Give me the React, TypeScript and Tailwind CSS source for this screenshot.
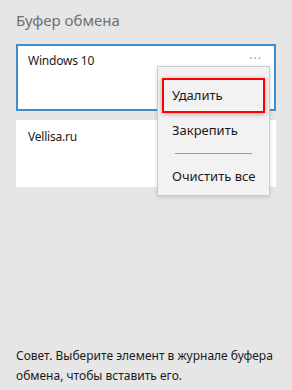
import React from 'react';

export default function App() {
  return (
    <div
      className="relative w-[292px] h-[390px] bg-[#e6e6e6] flex flex-col overflow-hidden"
      style={{ fontFamily: '"Noto Sans", "Segoe UI", sans-serif' }}
    >
      {/* Header */}
      <div className="px-4 pt-[10px] text-[15px] leading-[20px] text-[#707070]">Буфер обмена</div>

      {/* Clipboard items */}
      <div className="flex flex-col gap-[9px] px-4 mt-[14px] pr-[16px]">
        <div className="h-[67px] bg-white border-2 border-[#3f8fcf] flex items-start justify-between pl-[10px] pr-[12px] pt-[6px]">
          <span className="text-[12px] leading-[18px] tracking-[-0.2px] text-[#1a1a1a]">Windows 10</span>
          <span className="text-[12px] leading-[14px] text-[#9a9a9a] tracking-[1px]">···</span>
        </div>
        <div className="h-[67px] bg-white flex items-start pl-[12px] pt-[8px]">
          <span className="text-[12px] leading-[18px] tracking-[-0.2px] text-[#1a1a1a]">Vellisa.ru</span>
        </div>
      </div>

      <div className="flex-1" />

      {/* Tip */}
      <div className="px-4 pb-[4px] text-[12px] leading-[20px] text-[#1a1a1a]">
        Совет. Выберите элемент в журнале буфера обмена, чтобы вставить его.
      </div>

      {/* Context menu */}
      <div className="absolute left-[157px] top-[66px] w-[113px] h-[130px] bg-[#f2f2f2] border border-[#cccccc] shadow-[0_1px_4px_rgba(0,0,0,0.15)] flex flex-col pt-[11px] px-[4px] text-[13px] text-[#1a1a1a]">
        <div className="h-[35px] border-2 border-[#ff0000] shadow-[0_1px_5px_rgba(0,0,0,0.3)] flex items-center pl-[8px]">
          Удалить
        </div>
        <div className="h-[35px] flex items-center pl-[10px]">Закрепить</div>
        <div className="mx-[13px] mt-[5px] h-px bg-[#9a9a9a]" />
        <div className="h-[35px] mt-[5px] flex items-center pl-[10px]">Очистить все</div>
      </div>
    </div>
  );
}
